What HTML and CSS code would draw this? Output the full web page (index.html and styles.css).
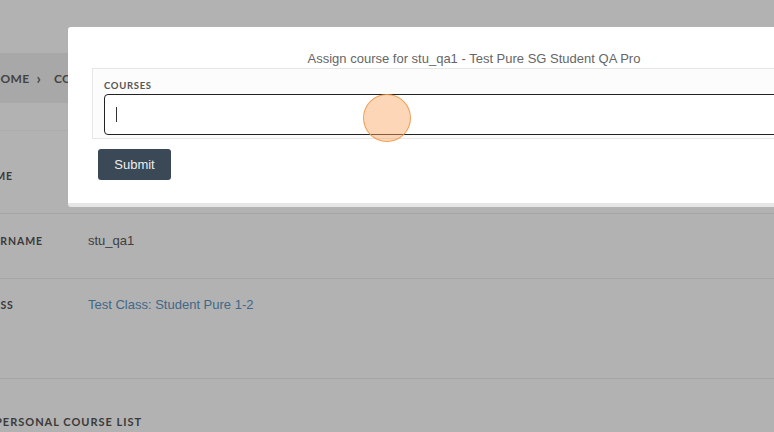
FILE: index.html
```html
<!DOCTYPE html>
<html lang="en">
<head>
    <meta charset="UTF-8">
    <meta name="viewport" content="width=device-width, initial-scale=1.0">
    <title>Student Details</title>
    <link rel="stylesheet" href="styles.css">
</head>
<body>
    <div class="topbar"></div>
    <div class="crumbs">
        <span class="crumb">Home</span>
        <span class="sep">&rsaquo;</span>
        <span class="crumb">Courses</span>
    </div>

    <div class="details">
        <div class="row row-first">
            <div class="label">Name</div>
            <div class="value">Test Pure SG Student QA Pro</div>
        </div>
        <div class="row row-second">
            <div class="label">Username</div>
            <div class="value">stu_qa1</div>
        </div>
        <div class="row row-third">
            <div class="label">Class</div>
            <div class="value"><a href="#" class="link">Test Class: Student Pure 1-2</a></div>
        </div>
    </div>

    <h2 class="section-title">Personal Course List</h2>

    <div class="backdrop"></div>

    <div class="modal">
        <div class="modal-title">Assign course for stu_qa1 - Test Pure SG Student QA Pro</div>
        <form class="panel">
            <label class="field-label">Courses</label>
            <div class="field"><span class="caret"></span></div>
        </form>
        <button type="button" class="submit">Submit</button>
    </div>

    <div class="click-dot"></div>
</body>
</html>
```

FILE: styles.css
```css
body {
    margin: 0;
    width: 774px;
    height: 432px;
    overflow: hidden;
    background: #ffffff;
    font-family: "Liberation Sans", Arial, sans-serif;
    position: relative;
}
.topbar {
    height: 53px;
}
.crumbs {
    height: 50px;
    background: #f1f1f1;
    display: flex;
    align-items: center;
    margin-left: -9px;
    font-family: Lato, "Open Sans", sans-serif;
    font-weight: 700;
    font-size: 12px;
    letter-spacing: 0.3px;
    text-transform: uppercase;
    color: #616161;
}
.sep {
    margin: 0 13px 0 7px;
    font-size: 15px;
}
.details {
    margin-top: 27px;
    border-top: 1px solid #f6f6f6;
}
.row {
    display: flex;
    align-items: flex-start;
    border-bottom: 1px solid #ececec;
    box-sizing: border-box;
}
.row-first {
    height: 83px;
    padding-top: 38px;
}
.row-second {
    height: 65px;
    padding-top: 20px;
}
.row-third {
    height: 100px;
    padding-top: 19px;
}
.label {
    width: 110px;
    margin-left: -22px;
    font-family: Lato, "Open Sans", sans-serif;
    font-weight: 700;
    font-size: 10.5px;
    letter-spacing: 0.9px;
    line-height: 14px;
    text-transform: uppercase;
    color: #545454;
}
.value {
    font-size: 13px;
    line-height: 14px;
    color: #5a5a5a;
}
.link {
    color: #5d95c4;
    text-decoration: none;
}
.section-title {
    margin: 36px 0 0 -5px;
    font-family: Lato, "Open Sans", sans-serif;
    font-weight: 700;
    font-size: 11px;
    letter-spacing: 1px;
    line-height: 14px;
    text-transform: uppercase;
    color: #545454;
}
.backdrop {
    position: absolute;
    inset: 0;
    background: rgba(0, 0, 0, 0.3);
}
.modal {
    position: absolute;
    top: 27px;
    left: 68px;
    width: 812px;
    height: 180px;
    box-sizing: border-box;
    background: #ffffff;
    border-bottom: 4px solid #e6e6e6;
    border-radius: 3px;
    padding: 23px 0 0 24px;
}
.modal-title {
    margin-left: -24px;
    text-align: center;
    font-size: 13px;
    line-height: 18px;
    color: #666666;
}
.panel {
    margin: 0;
    background: #fcfcfc;
    border: 1px solid #e6e6e6;
    padding: 10px 11px 3px;
    height: 71px;
    box-sizing: border-box;
}
.field-label {
    display: block;
    font-family: Lato, "Open Sans", sans-serif;
    font-weight: 700;
    font-size: 9.5px;
    letter-spacing: 0.7px;
    line-height: 14px;
    text-transform: uppercase;
    color: #555555;
    margin-bottom: 1px;
}
.field {
    height: 41px;
    box-sizing: border-box;
    border: 1.5px solid #222222;
    border-radius: 4px;
    background: #ffffff;
    display: flex;
    align-items: center;
    padding-left: 11px;
}
.caret {
    width: 1px;
    height: 15px;
    background: #333333;
}
.submit {
    margin: 10px 0 0 6px;
    width: 73px;
    height: 31px;
    border: none;
    border-radius: 3px;
    background: #3b4855;
    color: #eeeeee;
    font-family: "Liberation Sans", Arial, sans-serif;
    font-size: 13px;
    cursor: pointer;
}
.click-dot {
    position: absolute;
    left: 363px;
    top: 94px;
    width: 48px;
    height: 48px;
    box-sizing: border-box;
    border-radius: 50%;
    background: rgba(250, 165, 95, 0.45);
    border: 1.5px solid rgba(236, 150, 70, 0.85);
}
```
